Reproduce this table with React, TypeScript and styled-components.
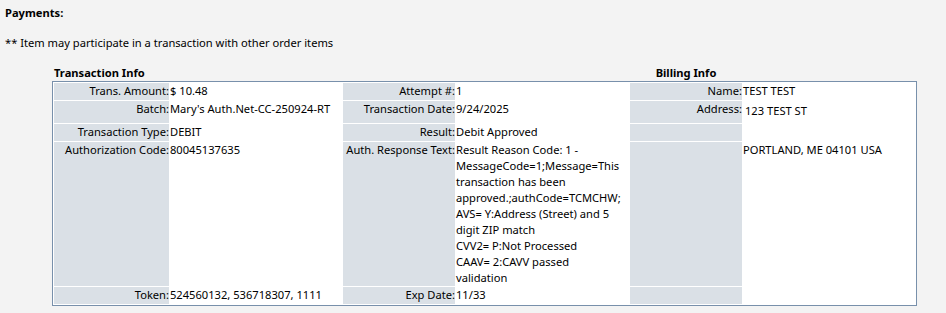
import React from "react";
import styled, { createGlobalStyle } from "styled-components";

const GlobalStyle = createGlobalStyle`
  html, body {
    margin: 0;
    padding: 0;
    background: #f3f3f3;
  }
  body {
    font-family: "Segoe UI", "Noto Sans", sans-serif;
    font-size: 11.15px;
    line-height: 16px;
    color: #000;
  }
`;

const Page = styled.div`
  padding: 5px 5px 0 5px;
`;

const Heading = styled.div`
  font-weight: 700;
  height: 16px;
`;

const Note = styled.div`
  margin-top: 14px;
  height: 16px;
`;

const Section = styled.section`
  margin: 14px 0 0 47px;
  width: 865px;
`;

/* Column widths shared by the caption strip and the table body */
const COLS = [115, 172, 112, 173, 112, 172];

const Captions = styled.div`
  display: grid;
  grid-template-columns: 2px ${COLS.slice(0, 4).map((w) => `${w + 1}px`).join(" ")} ${COLS[4]}px 1fr;
  height: 16px;
  font-weight: 700;
`;

const Caption = styled.div<{ $col: string; $center?: boolean }>`
  grid-column: ${(p) => p.$col};
  text-align: ${(p) => (p.$center ? "center" : "left")};
  white-space: nowrap;
`;

const Table = styled.table`
  width: 865px;
  table-layout: fixed;
  border-collapse: separate;
  border-spacing: 1px;
  border: 1px solid #7890ab;
  background: #fff;
  margin: 0;
`;

const Row = styled.tr<{ $h?: number }>`
  height: ${(p) => (p.$h ? `${p.$h}px` : "auto")};
`;

const Label = styled.td`
  background: #dae0e6;
  text-align: right;
  vertical-align: top;
  padding: 0;
  white-space: nowrap;
  line-height: 16px;
`;

const Value = styled.td<{ $pad?: boolean }>`
  background: #fff;
  text-align: left;
  vertical-align: top;
  padding: ${(p) => (p.$pad ? "2px 2px 0 2px" : "0")};
  line-height: 16px;
`;

const Wrapped = styled.div`
  white-space: normal;
`;

const responseLines = [
  "Result Reason Code: 1 -",
  "MessageCode=1;Message=This",
  "transaction has been",
  "approved.;authCode=TCMCHW;",
  "AVS= Y:Address (Street) and 5",
  "digit ZIP match",
  "CVV2= P:Not Processed",
  "CAAV= 2:CAVV passed",
  "validation",
];

export default function App() {
  return (
    <>
      <GlobalStyle />
      <Page>
        <Heading>Payments:</Heading>
        <Note>** Item may participate in a transaction with other order items</Note>
        <Section>
          <Captions>
            <Caption $col="2 / 5">Transaction Info</Caption>
            <Caption $col="6 / 7" $center>
              Billing Info
            </Caption>
          </Captions>
          <Table>
            <colgroup>
              {COLS.map((w, i) => (
                <col key={i} style={{ width: w }} />
              ))}
            </colgroup>
            <tbody>
              <Row $h={17}>
                <Label>Trans. Amount:</Label>
                <Value>$ 10.48</Value>
                <Label>Attempt #:</Label>
                <Value>1</Value>
                <Label>Name:</Label>
                <Value>TEST TEST</Value>
              </Row>
              <Row $h={22}>
                <Label>Batch:</Label>
                <Value>Mary's Auth.Net-CC-250924-RT</Value>
                <Label>Transaction Date:</Label>
                <Value>9/24/2025</Value>
                <Label>Address:</Label>
                <Value $pad>123 TEST ST</Value>
              </Row>
              <Row $h={17}>
                <Label>Transaction Type:</Label>
                <Value>DEBIT</Value>
                <Label>Result:</Label>
                <Value>Debit Approved</Value>
                <Label />
                <Value />
              </Row>
              <Row>
                <Label>Authorization Code:</Label>
                <Value>80045137635</Value>
                <Label>Auth. Response Text:</Label>
                <Value>
                  <Wrapped>
                    {responseLines.map((l, i) => (
                      <div key={i}>{l}</div>
                    ))}
                  </Wrapped>
                </Value>
                <Label />
                <Value>PORTLAND, ME 04101 USA</Value>
              </Row>
              <Row $h={17}>
                <Label>Token:</Label>
                <Value>524560132, 536718307, 1111</Value>
                <Label>Exp Date:</Label>
                <Value>11/33</Value>
                <Label />
                <Value />
              </Row>
            </tbody>
          </Table>
        </Section>
      </Page>
    </>
  );
}
